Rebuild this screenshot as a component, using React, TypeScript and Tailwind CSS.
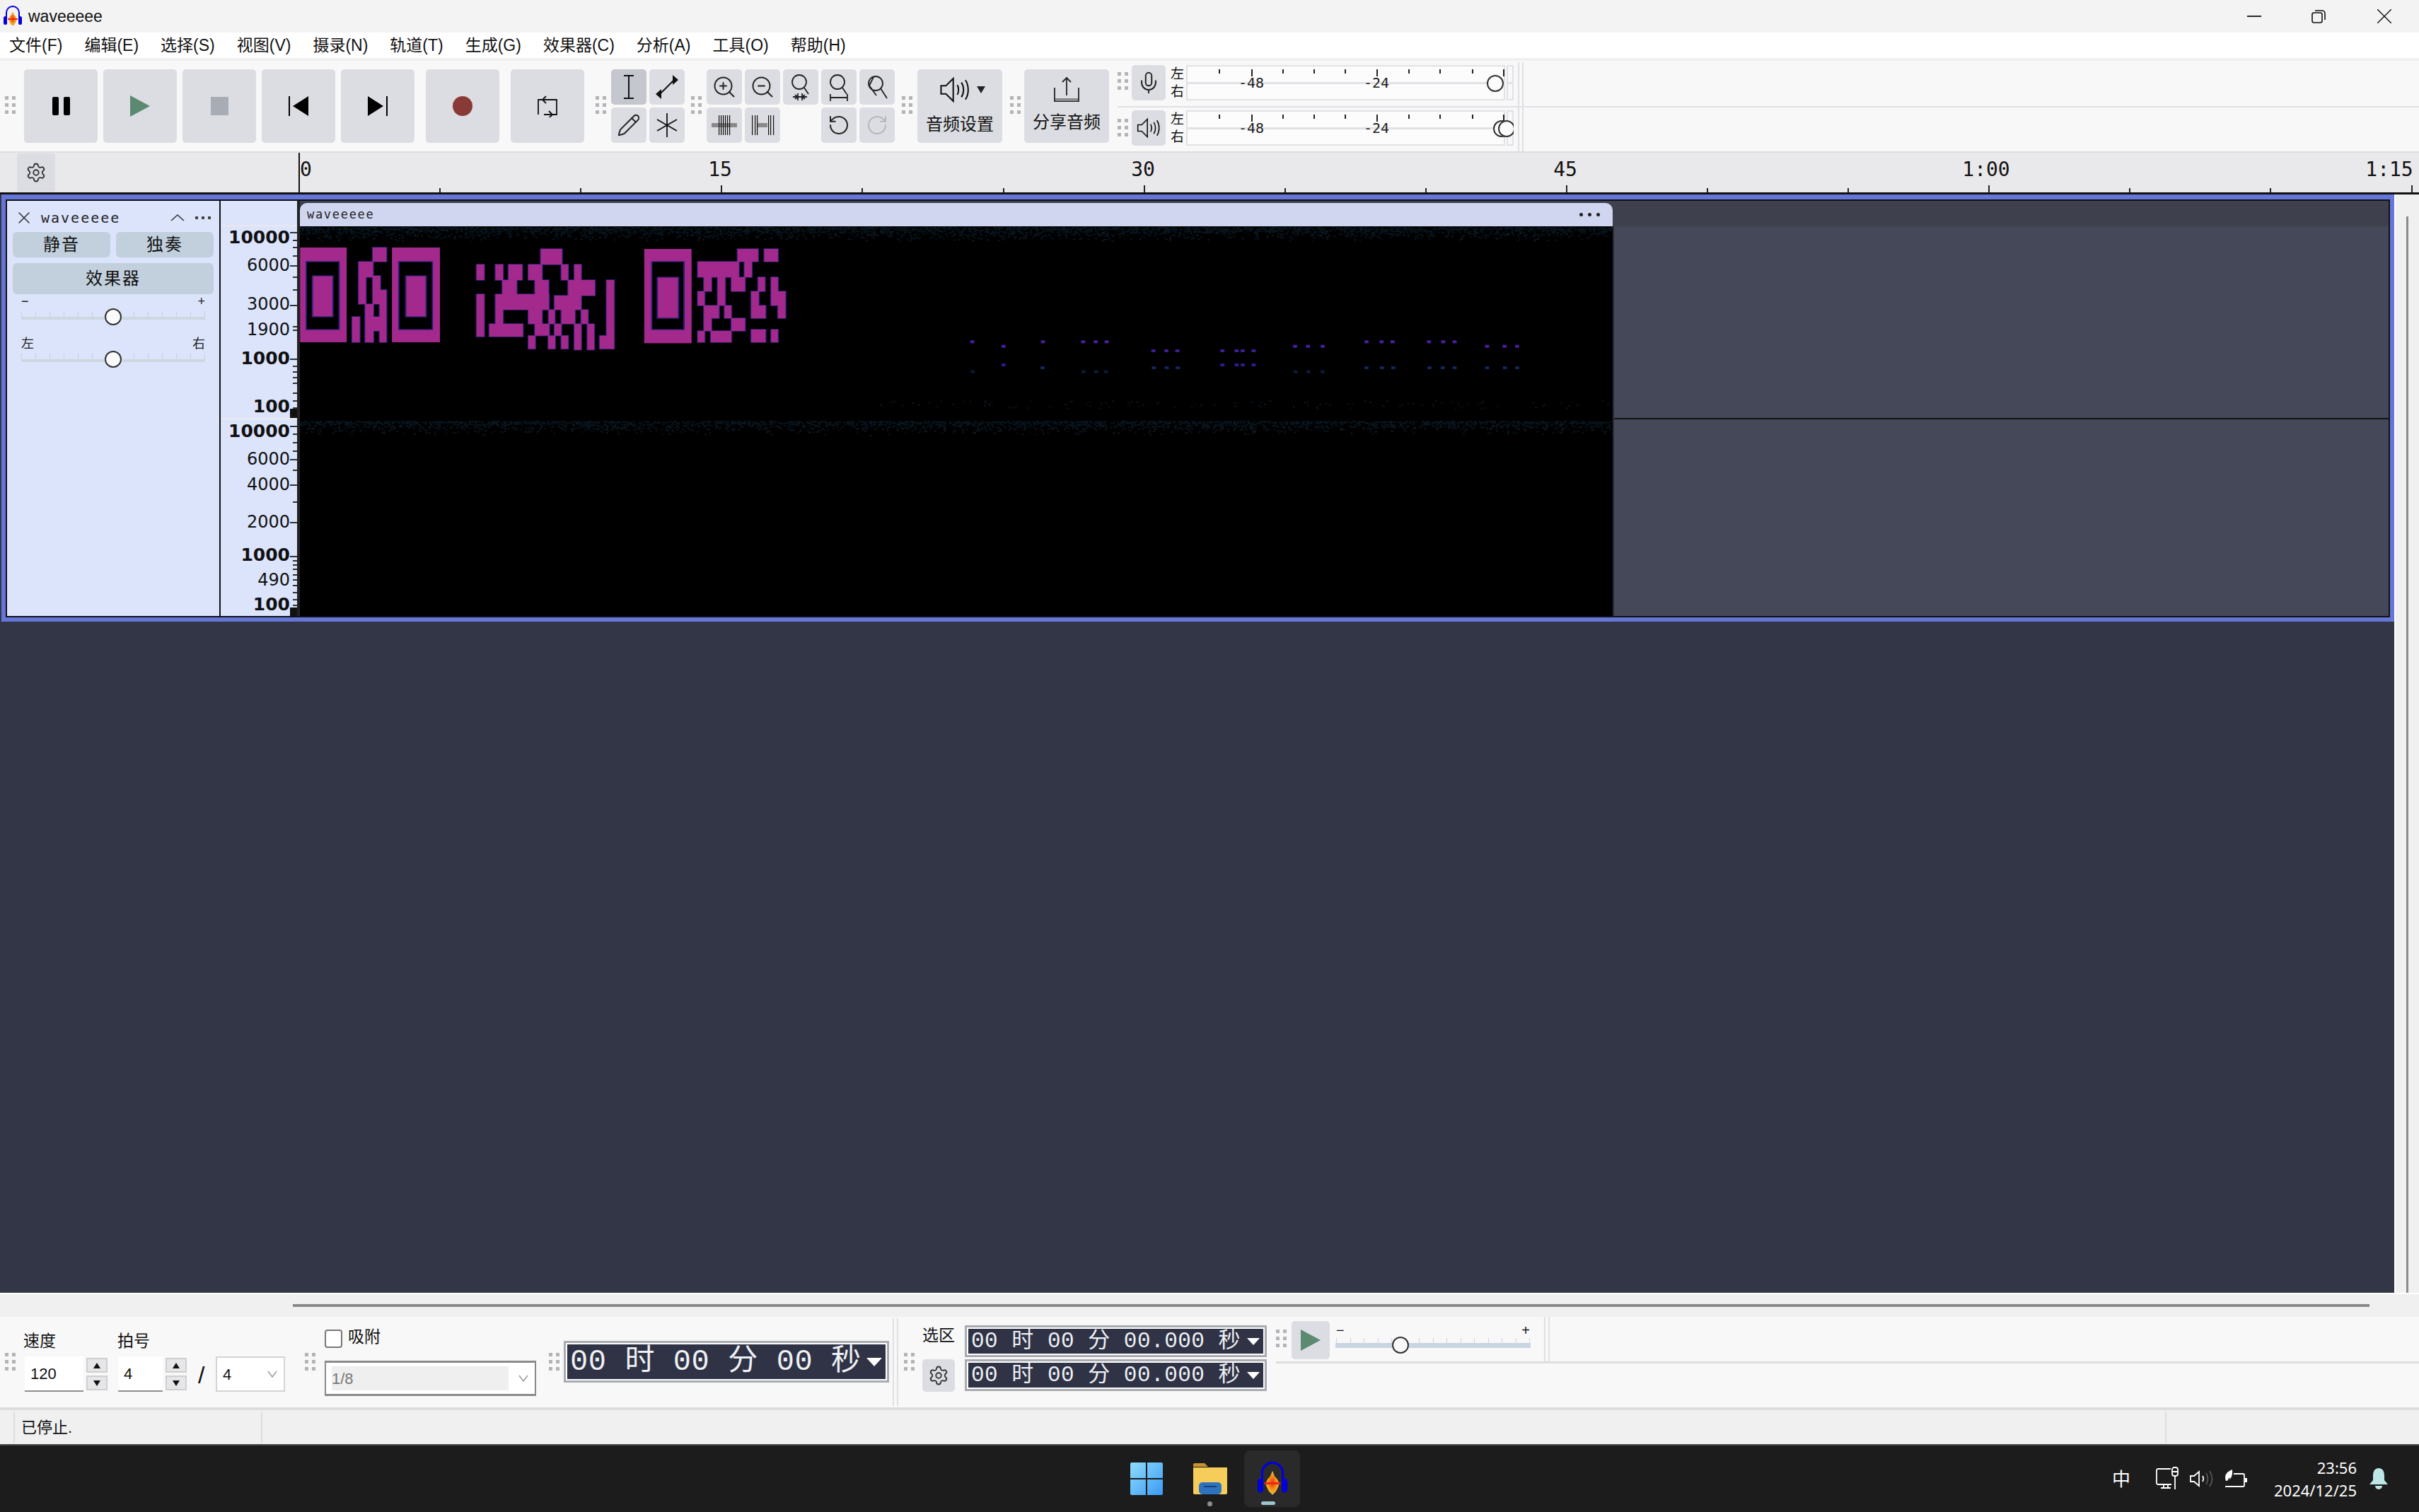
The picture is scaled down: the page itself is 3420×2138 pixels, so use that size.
import { useMemo } from 'react';
import { Mic, Pencil, RotateCcw, RotateCw, Settings, X, ZoomIn, ZoomOut } from 'lucide-react';

const mono = "font-['DejaVu_Sans_Mono','Noto_Sans_CJK_SC',monospace]";
const timeFont = "font-['Liberation_Mono','Noto_Sans_CJK_SC',monospace]";

const MAGENTA: number[][] = [
  [262, 210, 40, 60], [221, 270, 42, 66], [221, 336, 21, 114], [262, 330, 22, 60], [262, 390, 40, 60],
  [240, 450, 24, 54], [282, 450, 20, 54], [202, 504, 22, 108], [240, 504, 62, 60], [240, 564, 24, 48], [282, 564, 20, 48],
  [752, 216, 62, 66], [565, 282, 22, 66], [620, 282, 22, 66], [658, 282, 40, 66], [716, 282, 40, 66], [812, 282, 20, 66], [850, 282, 20, 66],
  [640, 348, 42, 60], [735, 348, 40, 60], [832, 348, 78, 66], [565, 408, 22, 180], [620, 408, 156, 66], [792, 414, 78, 60],
  [620, 474, 22, 60], [602, 534, 98, 54], [716, 474, 40, 60], [775, 474, 18, 60], [812, 474, 40, 60], [870, 474, 20, 60],
  [735, 534, 42, 50], [792, 534, 20, 50], [850, 534, 20, 110], [888, 534, 20, 110], [716, 584, 20, 56], [774, 584, 20, 56], [812, 584, 20, 56],
  [944, 348, 22, 240], [924, 584, 42, 56],
  [1326, 216, 60, 54], [1404, 216, 40, 54], [1210, 270, 120, 66], [1346, 270, 22, 66],
  [1228, 336, 22, 60], [1268, 336, 22, 60], [1308, 336, 40, 60], [1386, 336, 20, 60], [1424, 336, 20, 60],
  [1210, 396, 20, 60], [1268, 396, 22, 60], [1366, 396, 22, 60], [1424, 396, 42, 60],
  [1228, 456, 44, 54], [1288, 456, 20, 54], [1366, 456, 42, 54], [1444, 456, 22, 54], [1228, 510, 22, 54], [1308, 510, 40, 54],
  [1210, 564, 20, 48], [1248, 564, 60, 48], [1366, 558, 42, 54], [1424, 558, 20, 54],
];
const FRAMES: number[][] = [
  [50, 210, 136, 402, 68, 270, 96, 288, 86, 330, 60, 174],
  [318, 210, 140, 402, 338, 270, 98, 288, 358, 330, 60, 174],
  [1054, 216, 138, 400, 1076, 270, 94, 288, 1092, 336, 62, 174],
];
const DOTS: [number, number[], string][] = [
  [130, [130, 304, 403, 434, 461, 1101, 1138, 1165, 1255, 1290, 1318], '#4b1fa3'],
  [149, [207, 925, 957, 993, 1398, 1441, 1472], '#4b1fa3'],
  [168, [576, 608, 635, 746, 781, 796, 823], '#3f1c96'],
  [228, [207, 746, 781, 796, 823], '#2f1c8c'],
  [240, [303, 577, 609, 636, 1101, 1139, 1167, 1256, 1289, 1318, 1398, 1442, 1472], '#10285a'],
  [257, [131, 404, 435, 459, 926, 958, 993], '#0c1c38'],
];

const RULER_1 = [
  { t: '10000', y: 336, b: true }, { t: '6000', y: 375 }, { t: '3000', y: 430 }, { t: '1900', y: 466 }, { t: '1000', y: 507, b: true }, { t: '100', y: 575, b: true },
  { t: '10000', y: 610, b: true }, { t: '6000', y: 649 }, { t: '4000', y: 685 }, { t: '2000', y: 738 }, { t: '1000', y: 785, b: true }, { t: '490', y: 820 }, { t: '100', y: 855, b: true },
];
const TICKS_MAJOR = [148, 265, 407, 600, 840, 958, 1050, 1185, 1305];
const TICKS_MINOR = [175, 200, 230, 305, 352, 482, 495, 625, 645, 665, 685, 722, 748, 775, 795, 868, 898, 928, 998, 1110, 1320, 1335, 1350, 1370, 1390, 1410, 1435, 1460, 1480];

function Grip({ className = '' }: { className?: string }) {
  return (
    <div className={`grid shrink-0 grid-cols-[5px_5px] gap-x-[5px] gap-y-[5px] self-start ${className}`}>
      {[0, 1, 2, 3, 4, 5].map((i) => (
        <span key={i} className="h-[5px] w-[5px] bg-[#b4b4b8]" />
      ))}
    </div>
  );
}

function Logo({ size }: { size: number }) {
  return (
    <svg width={size} height={size} viewBox="0 0 32 32" className="shrink-0">
      <defs>
        <radialGradient id="wave" cx="50%" cy="50%" r="55%">
          <stop offset="0%" stopColor="#ee2a12" />
          <stop offset="55%" stopColor="#f49a18" />
          <stop offset="100%" stopColor="#e8c860" />
        </radialGradient>
      </defs>
      <path d="M7 20V11a9 9 0 0 1 18 0v9" fill="none" stroke="#0000dd" strokeWidth="2" />
      <rect x="3" y="16" width="5" height="12" rx="2.5" fill="#0000dd" />
      <rect x="24" y="16" width="5" height="12" rx="2.5" fill="#0000dd" />
      <path d="M16 9l2 5 2 2 2 4-1 3-2 4-3 3-3-3-2-4-1-3 2-4 2-2z" fill="url(#wave)" />
      <rect x="9" y="19" width="14" height="2" fill="#ee2a12" />
    </svg>
  );
}

function SpeakerIcon({ size = 40 }: { size?: number }) {
  return (
    <svg width={size} height={size} viewBox="0 0 40 40" fill="none" stroke="#111" strokeWidth="1.800">
      <path d="M3 15h6l9-9v28l-9-9H3z" />
      <path d="M23 14c2 3 2 9 0 12M28 11c3.500 5 3.500 13 0 18M33 8c4.500 7 4.500 17 0 24" />
    </svg>
  );
}

function Btn({ children, className = 'w-[50px] h-[50px]', active = false }: { children?: React.ReactNode; className?: string; active?: boolean }) {
  return (
    <div className={`flex shrink-0 items-center justify-center rounded-[5px] ${active ? 'bg-[#c5c7ce]' : 'bg-[#dcdde2]'} ${className}`}>{children}</div>
  );
}

function BigBtn({ children }: { children: React.ReactNode }) {
  return <Btn className="h-[104px] w-[104px]">{children}</Btn>;
}

function FitIcon({ kind }: { kind: 'sel' | 'project' | 'toggle' }) {
  return (
    <svg width="38" height="40" viewBox="0 0 38 40" fill="none" stroke="#222" strokeWidth="1.800">
      <circle cx="17" cy={kind === 'toggle' ? 15 : 13} r="10" />
      <path d={kind === 'toggle' ? 'M24 22l9 14M14 6l-6 12 10 14' : 'M24 21l6 9'} />
      {kind === 'sel' && <path d="M8 34h20M15 29v10M21 29v10M11 31l4 3-4 3M25 31l-4 3 4 3" />}
      {kind === 'project' && <path d="M7 35h24M7 30v10M31 30v10" />}
    </svg>
  );
}

function TrimIcon({ silence }: { silence?: boolean }) {
  return (
    <svg width="40" height="40" viewBox="0 0 40 40">
      {silence ? (
        <>
          <rect x="13" y="17" width="14" height="6" fill="#8a8a8a" />
          {[5, 9, 12, 28, 31, 35].map((x) => (
            <rect key={x} x={x} y="6" width="1.200" height="28" fill="#111" />
          ))}
        </>
      ) : (
        <>
          <rect x="2" y="17" width="36" height="6" fill="#8a8a8a" />
          {[12, 15, 18, 21, 24, 27].map((x) => (
            <rect key={x} x={x} y="6" width="1.200" height="28" fill="#111" />
          ))}
        </>
      )}
    </svg>
  );
}

function Meter({ input }: { input?: boolean }) {
  const minor = [46, 136, 180, 224, 314, 358, 404, 448];
  return (
    <div className="relative h-[50px] w-[463px] shrink-0 overflow-hidden">
      <div className="absolute left-0 top-0 h-[50px] w-[451px] border-2 border-[#e2e2e6] bg-[#fcfcfc]" />
      <div className="absolute right-0 top-0 h-[50px] w-[10px] border-2 border-[#e2e2e6]" />
      <div className="absolute right-0 top-[24px] h-[3px] w-[10px] bg-[#e2e2e6]" />
      <div className="absolute left-0 top-[24px] h-[3px] w-[451px] bg-[#e2e2e6]" />
      {minor.map((x) => (
        <span key={x} className="absolute top-[6px] h-[6px] w-[2px] bg-[#222]" style={{ left: x }} />
      ))}
      <span className="absolute left-[448px] top-[6px] h-[10px] w-[2px] bg-[#222]" />
      <span className="absolute left-[92px] top-[6px] h-[10px] w-[2px] bg-[#222]" />
      <span className="absolute left-[269px] top-[6px] h-[10px] w-[2px] bg-[#222]" />
      <span className={`absolute left-[74px] top-[14px] text-[20px] leading-[22px] text-[#222] ${mono}`}>-48</span>
      <span className={`absolute left-[251px] top-[14px] text-[20px] leading-[22px] text-[#222] ${mono}`}>-24</span>
      {!input && <span className="absolute left-[434px] top-[14px] h-[24px] w-[24px] rounded-full border-2 border-[#333] bg-[#fcfcfc]" />}
      <span className={`absolute top-[14px] h-[24px] w-[24px] rounded-full border-2 border-[#333] bg-[#fcfcfc] ${input ? 'left-[425px]' : 'left-[441px]'}`} />
    </div>
  );
}

function TimeBox({ text, big }: { text: string; big?: boolean }) {
  return (
    <div className={`flex items-center border-[3px] border-[#a9abb2] bg-white p-[2px] ${big ? 'h-[59px] w-[460px]' : 'h-[45px] w-[427px]'}`}>
      <div className="flex h-full w-full items-center justify-between bg-[#2f3345] pl-[4px] pr-[5px] text-[#eef0f4]">
        <span className={`whitespace-pre ${timeFont} ${big ? 'text-[42px] leading-[48px] tracking-[0.600px]' : 'text-[31px] leading-[36px] tracking-[0.500px]'}`}>{text}</span>
        <svg width={big ? 22 : 18} height={big ? 12 : 10} viewBox="0 0 22 12">
          <path d="M0 0h22L11 12z" fill="#fff" />
        </svg>
      </div>
    </div>
  );
}

function SpinInput({ value, width }: { value: string; width: string }) {
  return (
    <div className="flex h-[50px] gap-[4px]">
      <div className={`flex items-center border-b-2 border-[#8f8f8f] bg-white pl-[8px] text-[22px] text-[#111] ${width}`}>{value}</div>
      <div className="flex w-[30px] flex-col gap-[4px] pt-[2px]">
        {[false, true].map((down) => (
          <div key={String(down)} className="flex h-[21px] items-center justify-center border-2 border-[#cfcfd2] bg-[#e6e6e9]">
            <svg width="10" height="8" viewBox="0 0 10 8">
              <path d={down ? 'M0 0h10L5 8z' : 'M0 8h10L5 0z'} fill="#111" />
            </svg>
          </div>
        ))}
      </div>
    </div>
  );
}

function Chevron() {
  return (
    <svg width="16" height="12" viewBox="0 0 16 12" fill="none" stroke="#999" strokeWidth="1.500">
      <path d="M2 2l6 8 6-8" />
    </svg>
  );
}

function PanelSlider({ left, right, mt }: { left: string; right: string; mt: string }) {
  return (
    <div className={`px-[20px] ${mt}`}>
      <div className="flex h-[20px] items-center justify-between text-[18px] leading-[20px] text-[#222]">
        <span>{left}</span>
        <span>{right}</span>
      </div>
      <div className="relative h-[24px]">
        <div className="absolute left-0 right-0 top-[12px] h-[4px] bg-[#cdd7df]" />
        <div className="absolute left-0 right-0 top-[4px] flex justify-between">
          {Array.from({ length: 14 }).map((_, i) => (
            <span key={i} className="h-[8px] w-[1px] bg-[#c8d0d8]" />
          ))}
        </div>
        <span className="absolute left-[118px] top-0 h-[24px] w-[24px] rounded-full border-2 border-[#333] bg-[#fafafa]" />
      </div>
    </div>
  );
}

function TimeRuler() {
  const labels = [
    { t: '15', x: 1018 }, { t: '30', x: 1616 }, { t: '45', x: 2213 }, { t: '1:00', x: 2808 }, { t: '1:15', x: 3378 },
  ];
  const ticks = Array.from({ length: 16 }, (_, i) => 422 + i * 199.100);
  return (
    <div className="relative flex h-[56px] shrink-0 bg-[#e9e9eb]">
      <div className="ml-[24px] mt-[1px] flex h-[54px] w-[54px] items-center justify-center rounded-[4px] bg-[#dcdde2]">
        <Settings size={30} strokeWidth={1.500} className="text-[#333]" />
      </div>
      <span className="absolute left-[422px] top-0 h-[56px] w-[2px] bg-[#111]" />
      <span className={`absolute left-[424px] top-[8px] text-[28px] leading-[32px] text-[#111] ${mono}`}>0</span>
      {labels.map((l) => (
        <span key={l.t} className={`absolute top-[8px] -translate-x-1/2 text-[28px] leading-[32px] text-[#111] ${mono}`} style={{ left: l.x }}>
          {l.t}
        </span>
      ))}
      {ticks.slice(1).map((x, i) => (
        <span key={x} className={`absolute bottom-0 w-[2px] bg-[#222] ${(i + 1) % 3 === 0 ? 'h-[10px]' : 'h-[6px]'}`} style={{ left: x }} />
      ))}
    </div>
  );
}

function Spectrogram() {
  const noise = useMemo(() => {
    let seed = 7;
    const rnd = () => {
      seed = (seed * 16807) % 2147483647;
      return seed / 2147483647;
    };
    const out: { x: number; y: number; c: string }[] = [];
    const cols = ['#081219', '#0a161f', '#060e14', '#0c1922'];
    for (let i = 0; i < 3600; i++) out.push({ x: 424 + rnd() * 1856, y: 321 + rnd() * rnd() * 20, c: cols[Math.floor(rnd() * 4)] });
    for (let i = 0; i < 3000; i++) out.push({ x: 424 + rnd() * 1856, y: 595 + rnd() * rnd() * 20, c: cols[Math.floor(rnd() * 4)] });
    for (let i = 0; i < 110; i++) out.push({ x: 1240 + rnd() * 1040, y: 566 + rnd() * 11, c: cols[Math.floor(rnd() * 3)] });
    return out;
  }, []);

  return (
    <svg width="1856" height="551" viewBox="424 320 1856 551" className="block shrink-0">
      <rect x="424" y="320" width="1856" height="551" fill="#000" />
      {noise.map((n, i) => (
        <rect key={i} x={n.x} y={n.y} width="3" height="2" fill={n.c} />
      ))}
      <g transform="translate(400 280) scale(0.4847 0.3333)">
        {MAGENTA.map((r, i) => (
          <rect key={'e' + i} x={r[0]} y={r[1]} width={r[2]} height={r[3]} fill="#a3298c" stroke="#2f1f78" strokeWidth="5" />
        ))}
        {FRAMES.map((f, i) => (
          <g key={'f' + i}>
            <rect x={f[0]} y={f[1]} width={f[2]} height={f[3]} fill="#a3298c" />
            <rect x={f[4]} y={f[5]} width={f[6]} height={f[7]} fill="#000" stroke="#2f1f78" strokeWidth="4" />
            <rect x={f[8]} y={f[9]} width={f[10]} height={f[11]} fill="#a3298c" stroke="#2f1f78" strokeWidth="4" />
          </g>
        ))}
        {MAGENTA.map((r, i) => (
          <rect key={'m' + i} x={r[0]} y={r[1]} width={r[2]} height={r[3]} fill="#a3298c" />
        ))}
      </g>
      <g transform="translate(1300 440) scale(0.574 0.3333)">
        {DOTS.map(([y, xs, c]) =>
          xs.map((x) => <rect key={y + '_' + x} x={x - 5} y={y - 6} width="10" height="12" fill={c} />),
        )}
      </g>
    </svg>
  );
}

export default function App() {
  const menus = ['文件(F)', '编辑(E)', '选择(S)', '视图(V)', '摄录(N)', '轨道(T)', '生成(G)', '效果器(C)', '分析(A)', '工具(O)', '帮助(H)'];

  return (
    <div className="flex h-[2138px] w-[3420px] flex-col overflow-hidden bg-[#333646] font-['Liberation_Sans','Noto_Sans_CJK_SC',sans-serif] text-[#111]">
      {/* title bar */}
      <div className="flex h-[46px] shrink-0 items-center bg-[#f3f3f3] pl-[2px]">
        <Logo size={32} />
        <span className="ml-[6px] text-[23px]">waveeeee</span>
        <div className="ml-auto flex items-center">
          <svg width="20" height="20" viewBox="0 0 20 20" className="mr-[71px]"><path d="M0 10h20" stroke="#111" strokeWidth="1.800" /></svg>
          <svg width="20" height="20" viewBox="0 0 20 20" fill="none" stroke="#111" strokeWidth="1.600" className="mr-[73px]">
            <rect x="1" y="5" width="14" height="14" rx="2.500" />
            <path d="M5 2h10a4 4 0 0 1 4 4v9" />
          </svg>
          <svg width="20" height="20" viewBox="0 0 20 20" fill="none" stroke="#111" strokeWidth="1.400" className="mr-[39px]"><path d="M0 0l20 20M20 0L0 20" /></svg>
        </div>
      </div>

      {/* menu */}
      <div className="flex h-[36px] shrink-0 items-center gap-[31px] bg-white pl-[13px] text-[23px]">
        {menus.map((m) => (
          <span key={m}>{m}</span>
        ))}
      </div>
      <div className="h-[4px] shrink-0 bg-[#f0f0f0]" />

      {/* transport and tools */}
      <div className="flex h-[130px] shrink-0 border-b-2 border-[#dedee2] bg-[#f8f8f8]">
        <Grip className="ml-[7px] mt-[50px]" />
        <div className="ml-[12px] mt-[12px] flex gap-[8px] self-start">
          <BigBtn>
            <div className="flex gap-[7px]">
              <span className="h-[26px] w-[9px] rounded-[2px] bg-black" />
              <span className="h-[26px] w-[9px] rounded-[2px] bg-black" />
            </div>
          </BigBtn>
          <BigBtn>
            <svg width="30" height="30" viewBox="0 0 30 30"><path d="M1 0l28 15L1 30z" fill="#5b8a70" /></svg>
          </BigBtn>
          <BigBtn>
            <span className="h-[26px] w-[25px] bg-[#a8acb4]" />
          </BigBtn>
          <BigBtn>
            <svg width="30" height="28" viewBox="0 0 30 28"><path d="M1 0h2v28H1zM29 0v28L7 14z" fill="#000" /></svg>
          </BigBtn>
          <BigBtn>
            <svg width="30" height="28" viewBox="0 0 30 28"><path d="M29 0h-2v28h2zM1 0v28l22-14z" fill="#000" /></svg>
          </BigBtn>
          <div className="ml-[8px]">
            <BigBtn>
              <span className="h-[28px] w-[28px] rounded-full bg-[#8a3a36]" />
            </BigBtn>
          </div>
          <div className="ml-[8px]">
            <BigBtn>
              <svg width="30" height="32" viewBox="0 0 30 32" fill="none" stroke="#111" strokeWidth="1.800">
                <path d="M2 28V7h26v21H10M13 2L8 7l5 5M17 23l5 5-5 5" />
              </svg>
            </BigBtn>
          </div>
        </div>
        <Grip className="ml-[16px] mt-[50px]" />
        <div className="ml-[7px] mt-[12px] grid grid-cols-[50px_50px] gap-x-[4px] gap-y-[4px] self-start">
          <Btn active>
            <svg width="24" height="36" viewBox="0 0 24 36" fill="none" stroke="#111" strokeWidth="2"><path d="M5 2h14M12 2v32M5 34h14" /></svg>
          </Btn>
          <Btn>
            <svg width="36" height="36" viewBox="0 0 36 36" fill="#111"><path d="M28 8L8 28" stroke="#111" strokeWidth="2" /><path d="M26 1l8 7-8 7zM10 21v14l-8-7z" /></svg>
          </Btn>
          <Btn><Pencil size={34} strokeWidth={1.400} className="text-[#222]" /></Btn>
          <Btn>
            <svg width="34" height="36" viewBox="0 0 34 36" fill="none" stroke="#111" strokeWidth="1.800"><path d="M17 1v34M3 10l28 16M31 10L3 26" /></svg>
          </Btn>
        </div>
        <Grip className="ml-[9px] mt-[50px]" />
        <div className="ml-[7px] mt-[12px] grid grid-cols-[50px_50px_50px_50px_50px] gap-[4px] self-start">
          <Btn><ZoomIn size={36} strokeWidth={1.300} className="text-[#222]" /></Btn>
          <Btn><ZoomOut size={36} strokeWidth={1.300} className="text-[#222]" /></Btn>
          <Btn><FitIcon kind="sel" /></Btn>
          <Btn><FitIcon kind="project" /></Btn>
          <Btn><FitIcon kind="toggle" /></Btn>
          <Btn><TrimIcon /></Btn>
          <Btn><TrimIcon silence /></Btn>
          <div />
          <Btn><RotateCcw size={32} strokeWidth={1.500} className="text-[#222]" /></Btn>
          <Btn><RotateCw size={32} strokeWidth={1.500} className="text-[#b4b6bb]" /></Btn>
        </div>
        <Grip className="ml-[10px] mt-[50px]" />
        <Btn className="ml-[7px] mt-[12px] h-[104px] w-[120px] !flex-col gap-[11px] !justify-start pt-[6px]">
          <div className="flex items-center gap-[8px] pl-[6px]">
            <SpeakerIcon size={46} />
            <svg width="12" height="10" viewBox="0 0 12 10"><path d="M0 0h12L6 10z" fill="#222" /></svg>
          </div>
          <span className="text-[24px] leading-[30px]">音频设置</span>
        </Btn>
        <Grip className="ml-[11px] mt-[50px]" />
        <Btn className="ml-[5px] mt-[12px] h-[104px] w-[120px] !flex-col gap-[14px] !justify-start pt-[10px]">
          <svg width="38" height="36" viewBox="0 0 38 36" fill="none" stroke="#222" strokeWidth="1.800">
            <path d="M19 1v26M13 8l6-6 6 6M2 16v19h34V16" />
            <rect x="3" y="31" width="32" height="4" fill="#888" stroke="none" />
          </svg>
          <span className="text-[24px] leading-[30px]">分享音频</span>
        </Btn>
        <div className="ml-[12px] flex flex-1 flex-col">
          <div className="flex h-[66px] border-b-2 border-[#e0e0e5]">
            <div className="flex w-[560px] shrink-0 items-end pb-[8px]">
              <Grip className="mb-[15px] !self-end" />
              <Btn className="ml-[5px] h-[50px] w-[48px]"><Mic size={34} strokeWidth={1.400} className="text-[#222]" /></Btn>
              <div className="ml-[7px] flex h-[50px] w-[22px] flex-col justify-between text-[19px] leading-[25px]">
                <span>左</span>
                <span>右</span>
              </div>
              <Meter input />
            </div>
            <div className="ml-[6px] mt-[2px] h-[62px] w-[8px] border-x-2 border-[#e0e0e5]" />
          </div>
          <div className="flex h-[62px]">
            <div className="flex w-[560px] shrink-0 items-start pt-[4px]">
              <Grip className="mt-[12px]" />
              <Btn className="ml-[5px] h-[50px] w-[48px]"><SpeakerIcon size={36} /></Btn>
              <div className="ml-[7px] flex h-[50px] w-[22px] flex-col justify-between text-[19px] leading-[25px]">
                <span>左</span>
                <span>右</span>
              </div>
              <Meter />
            </div>
            <div className="ml-[6px] h-[62px] w-[8px] border-x-2 border-[#e0e0e5]" />
          </div>
        </div>
      </div>

      <TimeRuler />
      <div className="h-[3px] shrink-0 bg-[#111]" />

      {/* tracks */}
      <div className="flex h-[1553px] shrink-0">
        <div className="flex-1 pl-[2px]">
          <div className="h-[604px] border-x-[6px] border-b-[6px] border-t-[7px] border-[#6676d8]">
            <div className="flex h-[591px] border-2 border-[#111]">
              <div className="h-full w-[300px] shrink-0 bg-[#dce4fc]">
                <div className="flex h-[44px] items-center pl-[10px] pr-[12px] pt-[4px]">
                  <X size={28} strokeWidth={1.300} className="text-[#333]" />
                  <span className={`ml-[10px] text-[20px] tracking-[2px] text-[#222] ${mono}`}>waveeeee</span>
                  <svg width="22" height="12" viewBox="0 0 22 12" fill="none" stroke="#333" strokeWidth="1.500" className="ml-auto"><path d="M2 10l9-8 9 8" /></svg>
                  <div className="ml-[14px] flex gap-[5px]">
                    <span className="h-[4px] w-[4px] bg-[#444]" />
                    <span className="h-[4px] w-[4px] bg-[#444]" />
                    <span className="h-[4px] w-[4px] bg-[#444]" />
                  </div>
                </div>
                <div className="flex gap-[8px] px-[8px]">
                  <div className="flex h-[36px] flex-1 items-center justify-center rounded-[6px] bg-[#c2d0de] text-[24px] tracking-[2px]">静音</div>
                  <div className="flex h-[36px] flex-1 items-center justify-center rounded-[6px] bg-[#c2d0de] text-[24px] tracking-[2px]">独奏</div>
                </div>
                <div className="mx-[8px] mt-[8px] flex h-[44px] items-center justify-center rounded-[6px] bg-[#c2d0de] text-[24px] tracking-[2px]">效果器</div>
                <PanelSlider left="−" right="+" mt="mt-[0px]" />
                <PanelSlider left="左" right="右" mt="mt-[16px]" />
              </div>
              <div className="w-[2px] shrink-0 bg-[#111]" />
              <div className="relative h-full w-[108px] shrink-0 bg-[#dce4fc]">
                <div className="absolute left-0 right-0 top-[34px] h-[2px] bg-[#e8e8ee]" />
                <div className="absolute left-0 right-0 top-[307px] h-[2px] bg-[#ecebea]" />
                {RULER_1.map((l, i) => (
                  <span
                    key={i}
                    className={`absolute right-[10px] -translate-y-1/2 font-['DejaVu_Sans',sans-serif] leading-[28px] text-[#111] ${l.b ? 'text-[25px] font-bold' : 'text-[24px]'}`}
                    style={{ top: l.y - 284 }}
                  >
                    {l.t}
                  </span>
                ))}
                {TICKS_MAJOR.map((y) => (
                  <span key={y} className="absolute right-0 h-[2px] w-[10px] bg-[#333]" style={{ top: 270 + y / 2.53 - 284 }} />
                ))}
                {TICKS_MINOR.map((y) => (
                  <span key={y} className="absolute right-0 h-[2px] w-[6px] bg-[#333]" style={{ top: 270 + y / 2.53 - 284 }} />
                ))}
                <span className="absolute right-0 top-[294px] h-[13px] w-[10px] bg-[#111]" />
                <span className="absolute right-0 top-[575px] h-[12px] w-[10px] bg-[#111]" />
              </div>
              <div className="w-[4px] shrink-0 bg-[#222]" />
              <div className="flex min-w-0 flex-1 flex-col">
                <div className="flex h-[36px] shrink-0 bg-[#3e404e]">
                  <div className="mt-[3px] flex h-[33px] w-[1856px] items-center rounded-t-[10px] bg-[#d0d6f0] pl-[10px] pr-[18px]">
                    <span className={`text-[17px] tracking-[1.700px] text-[#222] ${mono}`}>waveeeee</span>
                    <div className="ml-auto flex gap-[7px]">
                      <span className="h-[5px] w-[5px] rounded-full bg-[#222]" />
                      <span className="h-[5px] w-[5px] rounded-full bg-[#222]" />
                      <span className="h-[5px] w-[5px] rounded-full bg-[#222]" />
                    </div>
                  </div>
                </div>
                <div className="flex min-h-0 flex-1">
                  <Spectrogram />
                  <div className="flex flex-1 flex-col border-l-2 border-[#2a2c38] bg-[#454858]">
                    <div className="h-[273px] border-b-2 border-[#111]" />
                  </div>
                </div>
              </div>
            </div>
          </div>
        </div>
        <div className="flex w-[35px] shrink-0 justify-center border-l-2 border-white bg-[#f0f0f0] pt-[31px]">
          <span className="h-full w-[3px] bg-[#8a8a8a]" />
        </div>
      </div>

      {/* horizontal scroll */}
      <div className="h-[2px] shrink-0 bg-white" />
      <div className="flex h-[32px] shrink-0 items-start bg-[#f0f0f0] pl-[414px] pt-[14px]">
        <span className="h-[4px] w-[2936px] bg-[#888]" />
      </div>

      {/* bottom tools */}
      <div className="flex h-[132px] shrink-0 border-b-4 border-[#dcdcdc] bg-[#f8f8f8]">
        <Grip className="ml-[7px] mt-[51px]" />
        <div className="ml-[11px] mt-[20px] w-[133px] self-start">
          <div className="text-[23px] leading-[28px]">速度</div>
          <div className="ml-[2px] mt-[8px]"><SpinInput value="120" width="w-[83px]" /></div>
        </div>
        <div className="mt-[20px] w-[139px] self-start">
          <div className="text-[23px] leading-[28px]">拍号</div>
          <div className="ml-[1px] mt-[8px] flex">
            <SpinInput value="4" width="w-[63px]" />
            <span className="ml-[16px] mt-[6px] text-[34px] font-light leading-[40px]">/</span>
          </div>
        </div>
        <div className="mt-[56px] flex h-[50px] w-[98px] items-center justify-between self-start border-2 border-[#d4d4d4] bg-white px-[8px] text-[22px]">
          4
          <Chevron />
        </div>
        <Grip className="ml-[28px] mt-[51px]" />
        <div className="ml-[13px] mt-[16px] w-[299px] self-start">
          <div className="flex h-[30px] items-center gap-[8px]">
            <span className="h-[26px] w-[25px] rounded-[4px] border-2 border-[#777] bg-white" />
            <span className="-mt-[6px] text-[23px]">吸附</span>
          </div>
          <div className="mt-[16px] flex h-[50px] items-center justify-between border-2 border-b-[3px] border-t-[3px] border-[#8a8a8a] bg-white px-[8px]">
            <div className="flex h-[34px] w-[250px] items-center bg-[#efefef] text-[22px] text-[#777]">1/8</div>
            <Chevron />
          </div>
        </div>
        <Grip className="ml-[18px] mt-[51px]" />
        <div className="ml-[6px] mt-[34px] self-start">
          <TimeBox text="00 时 00 分 00 秒" big />
        </div>
        <div className="ml-[5px] mt-[2px] h-[124px] w-[8px] self-start border-x-2 border-[#e0e0e0]" />
        <Grip className="ml-[8px] mt-[51px]" />
        <div className="ml-[11px] mt-[10px] flex w-[46px] flex-col self-start">
          <span className="mt-[2px] whitespace-nowrap text-[23px] leading-[28px]">选区</span>
          <Btn className="mt-[20px] h-[46px] w-[46px]"><Settings size={30} strokeWidth={1.500} className="text-[#333]" /></Btn>
        </div>
        <div className="ml-[14px] mt-[12px] flex flex-col gap-[3px] self-start">
          <TimeBox text="00 时 00 分 00.000 秒" />
          <TimeBox text="00 时 00 分 00.000 秒" />
        </div>
        <div className="ml-[13px] flex flex-1 flex-col">
          <div className="flex h-[66px] border-b-[3px] border-[#dedede]">
            <div className="flex w-[379px]">
              <Grip className="mt-[18px]" />
              <Btn className="ml-[7px] mt-[6px] h-[54px] w-[54px]">
                <svg width="30" height="30" viewBox="0 0 30 30"><path d="M1 0l28 15L1 30z" fill="#5b8a70" /></svg>
              </Btn>
              <div className="ml-[8px] mt-[10px] w-[276px]">
                <div className="flex h-[18px] items-center justify-between px-[1px] text-[20px] leading-[18px]">
                  <span>−</span>
                  <span>+</span>
                </div>
                <div className="relative h-[24px]">
                  <div className="absolute left-0 right-0 top-[9px] h-[7px] bg-[#c9d5e2]" />
                  <div className="absolute left-0 right-0 top-[2px] flex justify-between px-[1px]">
                    {Array.from({ length: 15 }).map((_, i) => (
                      <span key={i} className="h-[7px] w-[1px] bg-[#c9d5e2]" />
                    ))}
                  </div>
                  <span className="absolute left-[80px] top-0 h-[24px] w-[24px] rounded-full border-2 border-[#333] bg-[#f8f8f8]" />
                </div>
              </div>
            </div>
            <div className="h-[63px] w-[8px] border-x-2 border-[#e0e0e0]" />
          </div>
        </div>
      </div>

      {/* status */}
      <div className="flex h-[48px] shrink-0 bg-[#f0f0f0] py-[2px] pl-[19px]">
        <div className="flex w-[352px] items-center border-x-2 border-[#dcdcdc] pl-[9px] text-[22px]">已停止.</div>
        <div className="ml-[2690px] w-[2px] bg-[#dcdcdc]" />
      </div>

      {/* taskbar */}
      <div className="flex h-[96px] shrink-0 items-center border-t-2 border-[#4a4a4a] bg-[#1c1c1c] font-['Noto_Sans','Noto_Sans_CJK_SC',sans-serif] text-white">
        <svg width="46" height="46" viewBox="0 0 46 46" className="ml-[1598px] shrink-0">
          <defs>
            <linearGradient id="win" x1="0" y1="0" x2="1" y2="1">
              <stop offset="0%" stopColor="#8fdcfb" />
              <stop offset="100%" stopColor="#3b9bf5" />
            </linearGradient>
          </defs>
          <path d="M0 2a2 2 0 0 1 2-2h20v22H0zM24 0h20a2 2 0 0 1 2 2v20H24zM0 24h22v22H2a2 2 0 0 1-2-2zM24 24h22v20a2 2 0 0 1-2 2H24z" fill="url(#win)" />
        </svg>
        <div className="relative ml-[43px] h-[80px] w-[48px] shrink-0">
          <svg width="48" height="44" viewBox="0 0 48 44" className="mt-[18px]">
            <path d="M0 2a2 2 0 0 1 2-2h14l5 5h-21z" fill="#c9952f" />
            <path d="M0 6h48v36a2 2 0 0 1-2 2H2a2 2 0 0 1-2-2z" fill="#f6cd5a" />
            <rect x="8" y="27" width="32" height="17" rx="5" fill="#2f73bf" />
            <rect x="15" y="32" width="18" height="2" fill="#173f78" />
          </svg>
          <span className="absolute bottom-[1px] left-[20px] h-[7px] w-[7px] rounded-full bg-[#8e8e8e]" />
        </div>
        <div className="relative ml-[24px] flex h-[80px] w-[79px] shrink-0 items-center justify-center rounded-[8px] bg-[#2a2a2a]">
          <Logo size={52} />
          <span className="absolute bottom-[3px] left-[24px] h-[5px] w-[20px] rounded-full bg-[#9fc5cc]" />
        </div>
        <span className="ml-[1148px] text-[26px] leading-none">中</span>
        <svg width="34" height="34" viewBox="0 0 34 34" fill="none" stroke="#fff" strokeWidth="1.800" className="ml-[36px] shrink-0">
          <path d="M22 25H3a2 2 0 0 1-2-2V5a2 2 0 0 1 2-2h18M7 30h14M11 25v5M17 25v5" />
          <rect x="23" y="1" width="8" height="12" rx="3" />
          <path d="M27 13v19M23 7h8" />
        </svg>
        <svg width="34" height="24" viewBox="0 0 34 24" fill="none" stroke="#fff" strokeWidth="1.800" className="ml-[14px] shrink-0">
          <path d="M1 8h5l7-6v20l-7-6H1z" />
          <path d="M18 8c1.500 2.500 1.500 5.500 0 8" />
          <path d="M23 4c3 5 3 11 0 16M28 1c4.500 7 4.500 15 0 22" stroke="#555" />
        </svg>
        <svg width="34" height="28" viewBox="0 0 34 28" fill="none" stroke="#fff" strokeWidth="1.800" className="ml-[14px] shrink-0">
          <path d="M14 7h13a2 2 0 0 1 2 2v14a2 2 0 0 1-2 2H2" />
          <rect x="30" y="13" width="3" height="6" fill="#fff" stroke="none" />
          <path d="M12 1c-8 3-12 8-9 16 6 0 10-6 9-16z" fill="#fff" stroke="none" />
          <path d="M3 24l5-11" stroke="#1c1c1c" />
        </svg>
        <div className="ml-[22px] flex w-[132px] flex-col items-end text-[22px] leading-[32px]">
          <span>23:56</span>
          <span>2024/12/25</span>
        </div>
        <svg width="28" height="32" viewBox="0 0 28 32" className="ml-[17px] shrink-0">
          <path d="M14 1c6 0 8 5 8 11v6l5 6H1l5-6v-6C6 6 8 1 14 1z" fill="#bfe6e6" />
          <path d="M9 26h10a5 5 0 0 1-10 0z" fill="#bfe6e6" />
        </svg>
      </div>
    </div>
  );
}
